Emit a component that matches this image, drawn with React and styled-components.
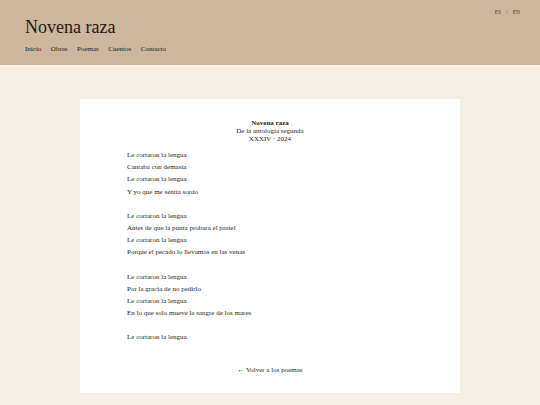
import React from 'react';
import styled, { createGlobalStyle } from 'styled-components';

const serif = `"Liberation Serif", "Times New Roman", Times, serif`;

const GlobalStyle = createGlobalStyle`
  html, body {
    margin: 0;
    padding: 0;
    background: #f4efe4;
    font-family: ${serif};
    color: #1f1c19;
  }
`;

const Page = styled.div`
  min-height: 405px;
  background: #f4efe4;
  font-family: ${serif};
  color: #1f1c19;
`;

const Header = styled.header`
  position: relative;
  height: 65px;
  box-sizing: border-box;
  padding: 16px 25px 0;
  background: #cdb59e;
`;

const SiteTitle = styled.h1`
  margin: 0;
  font-size: 18px;
  font-weight: 400;
  line-height: 22px;
  color: #1f1a15;
`;

const Nav = styled.nav`
  display: flex;
  gap: 9.5px;
  margin-top: 6px;
`;

const NavLink = styled.a`
  font-size: 7px;
  line-height: 10px;
  color: #231e19;
  text-decoration: none;
`;

const Lang = styled.div`
  position: absolute;
  top: 9px;
  right: 20px;
  font-size: 5.5px;
  color: #4a3f35;
  display: flex;
  gap: 5px;
`;

const Main = styled.main`
  display: flex;
  justify-content: center;
  padding-top: 34px;
`;

const Card = styled.article`
  width: 380px;
  height: 294px;
  box-sizing: border-box;
  background: #ffffff;
  padding: 20px 47px 0;
`;

const Heading = styled.div`
  text-align: center;
  font-size: 7px;
  line-height: 8px;
`;

const PoemTitle = styled.div`
  font-weight: 700;
`;

const Poem = styled.div`
  margin-top: 6px;
`;

const Stanza = styled.div`
  margin-bottom: 12px;
`;

const Line = styled.div`
  font-size: 7px;
  line-height: 12.2px;
`;

const Back = styled.a`
  display: block;
  text-align: center;
  margin-top: 22px;
  font-size: 7px;
  color: #1f1c19;
  text-decoration: none;
`;

const stanzas = [
  ['Le cortaron la lengua', 'Cantaba con demasía', 'Le cortaron la lengua', 'Y yo que me sentía sordo'],
  ['Le cortaron la lengua', 'Antes de que la punta probara el pastel', 'Le cortaron la lengua', 'Porque el pecado lo llevamos en las venas'],
  ['Le cortaron la lengua', 'Por la gracia de no pedirlo', 'Le cortaron la lengua', 'En lo que solo mueve la sangre de los mares'],
  ['Le cortaron la lengua.'],
];

export default function App() {
  return (
    <Page>
      <GlobalStyle />
      <Header>
        <SiteTitle>Novena raza</SiteTitle>
        <Nav>
          {['Inicio', 'Obras', 'Poemas', 'Cuentos', 'Contacto'].map((n) => (
            <NavLink key={n} href="#">{n}</NavLink>
          ))}
        </Nav>
        <Lang>
          <span>ES</span>
          <span>/</span>
          <span>EN</span>
        </Lang>
      </Header>
      <Main>
        <Card>
          <Heading>
            <PoemTitle>Novena raza</PoemTitle>
            <div>De la antología segunda</div>
            <div>XXXIV · 2024</div>
          </Heading>
          <Poem>
            {stanzas.map((s, i) => (
              <Stanza key={i}>
                {s.map((l, j) => (
                  <Line key={j}>{l}</Line>
                ))}
              </Stanza>
            ))}
          </Poem>
          <Back href="#">← Volver a los poemas</Back>
        </Card>
      </Main>
    </Page>
  );
}
